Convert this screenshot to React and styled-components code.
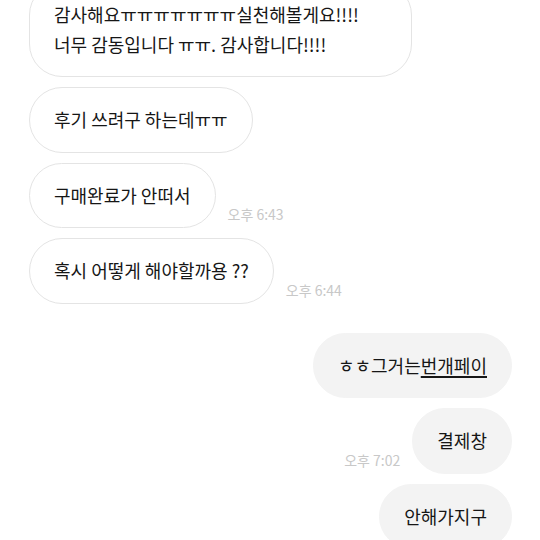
import React from "react";
import styled, { createGlobalStyle } from "styled-components";

const Global = createGlobalStyle`
  html, body { margin: 0; padding: 0; background: #ffffff; }
  body { font-family: "Noto Sans CJK KR", "Noto Sans", sans-serif; }
`;

const Screen = styled.div`
  width: 540px;
  height: 540px;
  overflow: hidden;
  background: #ffffff;
`;

const Chat = styled.div`
  display: flex;
  flex-direction: column;
  gap: 29px;
  padding: 0 28px 0 29px;
  margin-top: -18px;
`;

const Group = styled.div`
  display: flex;
  flex-direction: column;
  gap: 10px;
`;

const Row = styled.div`
  display: flex;
  align-items: flex-end;
  gap: 12px;
  justify-content: ${(p) => (p.$mine ? "flex-end" : "flex-start")};
`;

const Bubble = styled.div`
  box-sizing: border-box;
  max-width: 383px;
  width: ${(p) => (p.$fill ? "383px" : "auto")};
  padding: 17px 24px;
  border-radius: 33px;
  border: 1px solid ${(p) => (p.$mine ? "#f3f3f3" : "#e4e4e4")};
  background: ${(p) => (p.$mine ? "#f3f3f3" : "#ffffff")};
  color: #161616;
  font-size: 18px;
  line-height: 29.5px;
  white-space: nowrap;
`;

const Time = styled.span`
  font-size: 14px;
  line-height: 16px;
  color: #c8c8c8;
  margin-bottom: 6px;
  white-space: nowrap;
`;

const Link = styled.span`
  text-decoration: underline;
  text-decoration-thickness: 1.5px;
  text-underline-offset: 3px;
`;

export default function App() {
  return (
    <Screen>
      <Global />
      <Chat>
        <Group>
          <Row>
            <Bubble $fill>
              감사해요ㅠㅠㅠㅠㅠㅠㅠ실천해볼게요!!!!
              <br />
              너무 감동입니다 ㅠㅠ. 감사합니다!!!!
            </Bubble>
          </Row>
          <Row>
            <Bubble>후기 쓰려구 하는데ㅠㅠ</Bubble>
          </Row>
          <Row>
            <Bubble>구매완료가 안떠서</Bubble>
            <Time>오후 6:43</Time>
          </Row>
          <Row>
            <Bubble>혹시 어떻게 해야할까용 ??</Bubble>
            <Time>오후 6:44</Time>
          </Row>
        </Group>
        <Group>
          <Row $mine>
            <Bubble $mine>
              ㅎㅎ그거는<Link>번개페이</Link>
            </Bubble>
          </Row>
          <Row $mine>
            <Time>오후 7:02</Time>
            <Bubble $mine>결제창</Bubble>
          </Row>
          <Row $mine>
            <Bubble $mine>안해가지구</Bubble>
          </Row>
        </Group>
      </Chat>
    </Screen>
  );
}
